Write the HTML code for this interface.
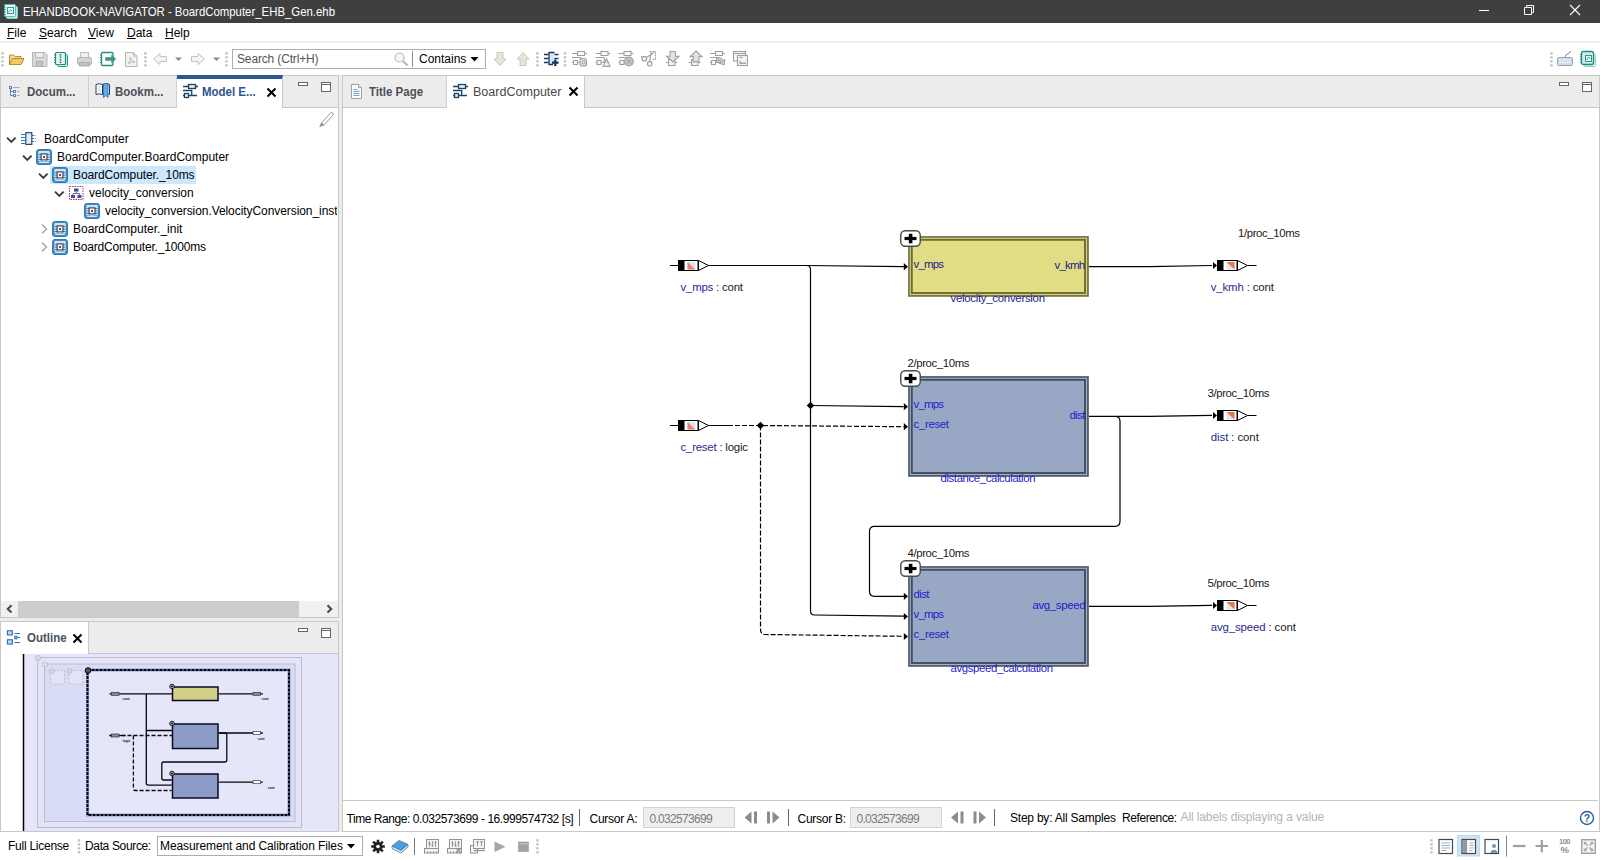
<!DOCTYPE html>
<html>
<head>
<meta charset="utf-8">
<title>EHANDBOOK-NAVIGATOR - BoardComputer_EHB_Gen.ehb</title>
<style>
*{box-sizing:border-box;margin:0;padding:0}
html,body{width:1600px;height:860px;overflow:hidden;background:#fff;font-family:"Liberation Sans",sans-serif;font-size:12px;color:#000}
.abs{position:absolute}
#titlebar{position:absolute;left:0;top:0;width:1600px;height:23px;background:#3f3f3f;color:#fff}
#titlebar .t{position:absolute;left:23px;top:4px;font-size:13px;white-space:nowrap;transform:scaleX(0.876);transform-origin:0 0}
#menubar{position:absolute;left:0;top:23px;width:1600px;height:19px;background:#fff}
#menubar span{position:absolute;top:3px;font-size:12px;white-space:nowrap}
#menubar u{text-decoration:underline}
#menusep{position:absolute;left:0;top:41px;width:1600px;height:2px;background:#f0f0f0}
#toolbar{position:absolute;left:0;top:44px;width:1600px;height:31px;background:#fff}
#main{position:absolute;left:0;top:75px;width:1600px;height:757px;background:#ececec}
#statusbar{position:absolute;left:0;top:832px;width:1600px;height:28px;background:#fff}
.panel{position:absolute;background:#fff;border:1px solid #c8c8c8}
.tabbar{position:absolute;left:0;top:0;right:0;height:32px;background:#ececec;border-bottom:1px solid #c8c8c8}

.tab{position:absolute;top:0;height:32px;font-weight:bold;font-size:12px;color:#4c4f56;white-space:nowrap}
.tab .lbl{position:absolute;top:9.5px;line-height:13px;transform:scaleX(0.957);transform-origin:0 0}
.tab.sep{border-right:1px solid #d0d0d0}
.tab.active{background:#fff;height:32px;border-right:1px solid #c8c8c8}
.tab.focus{border-top:4px solid #2f5591;color:#2f5591}
.tab.focus .lbl{top:6.5px}
.row{position:absolute;left:0;height:18px;white-space:nowrap;font-size:12px;line-height:18px}
.row .lbl{position:absolute;top:0}
.sel{position:absolute;background:#cce8ff;height:18px}
.txt{position:absolute;white-space:nowrap}
svg{position:absolute;overflow:visible}
</style>
</head>
<body>
<div id="titlebar">
  <svg style="left:3px;top:3px" width="16" height="16" viewBox="0 0 16 16">
    <rect x="3.5" y="3.5" width="11" height="12" rx="1" fill="#bfe6e0" stroke="#7fd0c6"/>
    <rect x="1.5" y="1.5" width="11" height="12" rx="1" fill="#e8f7f5" stroke="#58c0b4"/>
    <rect x="4.5" y="4.5" width="6" height="6" fill="#fff" stroke="#2f9e92"/>
    <path d="M5.5 9.5 L7.5 6.5 L9.5 8.5" stroke="#2f9e92" fill="none"/>
    <path d="M1 4h2M1 6.5h2M1 9h2M1 11.5h2" stroke="#2f9e92"/>
  </svg>
  <div class="t">EHANDBOOK-NAVIGATOR - BoardComputer_EHB_Gen.ehb</div>
  <svg style="left:1470px;top:0" width="130" height="23" viewBox="0 0 130 23">
    <path d="M9 10.5h10" stroke="#fff" stroke-width="1"/>
    <path d="M54.5 7.5h7v7h-7z M56.5 7.5v-2h7v7h-2" stroke="#fff" fill="none" stroke-width="1"/>
    <path d="M100 5l10 10M110 5l-10 10" stroke="#fff" stroke-width="1.1"/>
  </svg>
</div>
<div id="menubar">
  <span style="left:7px"><u>F</u>ile</span>
  <span style="left:39px"><u>S</u>earch</span>
  <span style="left:88px"><u>V</u>iew</span>
  <span style="left:127px"><u>D</u>ata</span>
  <span style="left:165px"><u>H</u>elp</span>
</div>
<div id="menusep"></div>
<div id="toolbar">
<svg style="left:0;top:0" width="1600" height="31" viewBox="0 44 1600 31">
  <g stroke="#c0c0c0" stroke-width="2.400" stroke-dasharray="2.300 1.700" fill="none">
    <path d="M2.500 52.300v15"/><path d="M145.500 52.300v15"/><path d="M226.500 52.300v15"/><path d="M537.500 52.300v15"/><path d="M565 52.300v15"/><path d="M1551.500 52.300v15"/>
  </g>
  <!-- open folder -->
  <path d="M9.5 64.5v-9.5h4l1.5 1.5h6v2" fill="#f7dc8e" stroke="#b98a2e"/>
  <path d="M9.5 64.5l3-6h11.5l-3 6z" fill="#f3c963" stroke="#b98a2e"/>
  <!-- floppy (disabled) -->
  <path d="M32.5 52.5h12.5l2 2v12h-14.5z" fill="#d9d9d9" stroke="#b9b9b9"/>
  <rect x="35.5" y="52.5" width="8" height="5" fill="#ececec" stroke="#b9b9b9"/>
  <rect x="36.5" y="61.5" width="6" height="5" fill="#c4c4c4" stroke="#b0b0b0"/>
  <!-- zip notebook -->
  <rect x="57.5" y="54.5" width="10" height="12" rx="1" fill="#c9ece7" stroke="#2a9d8f"/>
  <rect x="55.5" y="52.5" width="10" height="12" rx="1" fill="#e4f6f3" stroke="#1f8e80" stroke-width="1.2"/>
  <path d="M54 55h2M54 57.5h2M54 60h2M54 62.500h2" stroke="#1f8e80"/>
  <path d="M60.500 54v9" stroke="#1f6e66" stroke-width="1.6" stroke-dasharray="1.5 1"/>
  <!-- printer (disabled) -->
  <rect x="80.500" y="52.500" width="8" height="6" fill="#f0f0f0" stroke="#bcbcbc"/>
  <rect x="77.500" y="57.500" width="14" height="7" rx="1.500" fill="#d4d4d4" stroke="#b4b4b4"/>
  <rect x="79.500" y="62.500" width="10" height="3.500" fill="#c0c0c0" stroke="#b0b0b0"/>
  <!-- export -->
  <rect x="101.500" y="52.500" width="11.500" height="13" rx="1" fill="#fbfefd" stroke="#2a8a80" stroke-width="1.300"/>
  <path d="M100 55h2M100 57.500h2M100 60h2M100 62.500h2" stroke="#1f8e80"/>
  <path d="M105.500 57.500h6v-2.300l4.300 3.800-4.300 3.800v-2.300h-6z" fill="#3a968c" stroke="#2a8a80" stroke-width="0.500"/>
  <!-- pdf (disabled) -->
  <path d="M125.500 52.500h8l3.500 3.500v10.500h-11.500z" fill="#f2f2f2" stroke="#b4b4b4"/>
  <path d="M133.500 52.500v3.500h3.500" fill="none" stroke="#b4b4b4"/>
  <path d="M128 63.500c2-2 3-5 2.500-6.500c-1 1 1 4.500 4.500 5c-2-0.500-5 0.500-7 1.500z" fill="none" stroke="#b0b0b0" stroke-width="0.900"/>
  <!-- back / forward -->
  <path d="M153.500 59l6.500-5.500v3h6.500v5h-6.500v3z" fill="#f4f4f4" stroke="#c2c2c2"/>
  <path d="M175 57.500h7l-3.500 3.500z" fill="#8c8c8c"/>
  <path d="M204.500 59l-6.500-5.500v3h-6.500v5h6.500v3z" fill="#f4f4f4" stroke="#c2c2c2"/>
  <path d="M213 57.500h7l-3.500 3.500z" fill="#8c8c8c"/>
  <!-- down / up -->
  <path d="M500 65.500l-6-6.500h3v-6.500h6v6.500h3z" fill="#e6e6da" stroke="#c6c6bc"/>
  <path d="M523 52.500l-6 6.500h3v6.500h6v-6.500h3z" fill="#e6e6da" stroke="#c6c6bc"/>
  <!-- chip icon (blue) -->
  <rect x="549" y="52.500" width="5.500" height="12" fill="#d6e6f8"/>
  <g stroke="#17395c" stroke-width="1.300" fill="none">
    <path d="M554.500 52.500h-5.500v12h4"/>
    <path d="M544 54.500h4.500M544 58.500h4.500M544 62.500h4.500M554.500 54.500h4M554.500 58.500h4"/>
    <path d="M552 62.700h6.600M555.300 59.400v6.600" stroke="#0f3460" stroke-width="2.200"/>
  </g>
  <!-- grey diagram icons -->
  <g stroke="#a0a0a0" fill="#f4f4f4" stroke-width="1.100">
    <g id="gi" fill="#fafafa">
      <rect x="577.500" y="51.500" width="7" height="4"/><path d="M572 53.500h5.500M584.500 53.500h2.500M572 57.500h8.700v5M577.500 62.500h8.500M572 62.500h1.500" fill="none"/><rect x="573.500" y="60.500" width="4" height="4"/>
    </g>
    <rect x="580" y="58.500" width="6.500" height="7.500" rx="2" fill="#e4e4e4"/><path d="M582.500 60.500v3.500h1.500q1 0 1-1t-1-0.800q1 0 1-0.900t-1-0.800z" fill="none" stroke-width="0.800"/>
    <use href="#gi" x="23.500"/>
    <path d="M603 66.500l3.500-8 3.500 8z" fill="#dcdcdc"/><path d="M604.500 64h4" fill="none" stroke="#fff" stroke-width="0.800"/>
    <use href="#gi" x="46.500"/>
    <circle cx="629" cy="61.500" r="4.400" fill="#cbc7c0" stroke="#a4a4a4"/>
    <path d="M626.300 58.800l5.400 5.400M631.700 58.800l-5.400 5.400" fill="none" stroke="#9a9a9a" stroke-width="0.900"/>
    <!-- scissors-like -->
    <path d="M649.500 51.500h6v8h-4" fill="none" stroke-dasharray="2 1"/>
    <circle cx="644.300" cy="58.700" r="2.300"/><circle cx="649.700" cy="63.700" r="2.300"/>
    <path d="M646.300 57.500l8-5M649.700 61.400l1.500-9.500M641 56.500h1.500" fill="none"/>
    <!-- step into -->
    <rect x="668.500" y="59.500" width="6.500" height="6"/><path d="M666 62.500h2.500M675 62.500h2.500" fill="none"/>
    <path d="M670 51.500h5.500v4.700h3.500l-6.200 5.800-6.200-5.800h3.400z" fill="#e3e1da"/>
    <!-- step out -->
    <rect x="691.500" y="59.500" width="6.500" height="6"/><path d="M689 62.500h2.500M698 62.500h2.500" fill="none"/>
    <path d="M696 51l6 5.600h-3.100v5.300h-5.700v-5.300h-3.100z" fill="#e3e1da"/>
    <!-- icon7 -->
    <use href="#gi" x="138"/>
    <path d="M716.500 58.500c3-1.500 6 0 6.500 2.500l1.800-1.200-0.500 4.700-4.500-1 1.600-1.200c-0.700-1.800-2.500-2.500-4.900-1.300z" fill="#dcdad4"/>
    <!-- icon8 windows -->
    <rect x="733.500" y="51.500" width="12" height="9.500" fill="#f8f8f8"/><path d="M733.500 53.500h12" fill="none"/>
    <rect x="737.500" y="55.500" width="10" height="10" fill="#f4f4f4"/>
    <path d="M739.500 57.500h3" fill="none"/>
    <path d="M739.500 64v-4l2.500 2.500h4v1.500z" fill="#a8a8a8" stroke="none"/>
  </g>
  <!-- keyboard -->
  <rect x="1557.500" y="57.500" width="15" height="8" rx="1" fill="#cfdbe8" stroke="#8ea4bc"/>
  <path d="M1559.500 60h11M1559.500 62.500h11" stroke="#fff" stroke-dasharray="1.500 1"/>
  <path d="M1565 57c0-3 5-3 5.500-6" fill="none" stroke="#777"/>
  <!-- notebook right -->
  <rect x="1584.500" y="54.500" width="11" height="12" rx="1" fill="#d9f0ec" stroke="#8fd3ca"/>
  <rect x="1581.500" y="51.500" width="12" height="13" rx="2" fill="#d3eeea" stroke="#1f8e80" stroke-width="1.300"/>
  <rect x="1585.500" y="55.500" width="6" height="6" fill="#fff" stroke="#2a9d8f"/>
  <path d="M1586.500 60l2-3 2 2" stroke="#2a9d8f" fill="none"/>
  <path d="M1580 54.500h2M1580 57h2M1580 59.500h2M1580 62h2" stroke="#1f8e80"/>
</svg>
<div class="abs" style="left:232px;top:5px;width:254px;height:20px;border:1px solid #adadad;background:#fff"></div>
<div class="txt" style="left:237px;top:8px;color:#555;letter-spacing:-0.150px">Search (Ctrl+H)</div>
<svg style="left:393px;top:7px" width="16" height="16" viewBox="0 0 16 16">
  <circle cx="6.500" cy="6.500" r="4.500" fill="#f6f6f6" stroke="#bdbdbd" stroke-width="1.200"/>
  <path d="M10 10l4.500 4.500" stroke="#b0b0b0" stroke-width="1.800"/>
</svg>
<div class="abs" style="left:412px;top:7px;width:1px;height:16px;background:#8a8a8a"></div>
<div class="txt" style="left:419px;top:8px;color:#000">Contains</div>
<svg style="left:470px;top:13px" width="9" height="5" viewBox="0 0 9 5"><path d="M0.500 0h8l-4 4.500z" fill="#000"/></svg>
</div>
<div id="main">
  <!-- LEFT TOP PANEL -->
  <div class="panel" id="lp" style="left:0;top:0;width:339px;height:543px">
    <div class="tabbar"></div>
    <div class="tab sep" style="left:0;width:88px"><span class="lbl" style="left:26px">Docum...</span>
      <svg style="left:7px;top:9px" width="14" height="14" viewBox="8 85 14 14" fill="none" stroke="#5f86b6" stroke-width="1">
        <rect x="9.500" y="86.500" width="2" height="2" fill="#e4eefa"/><path d="M10.500 88.500v7h3M10.500 91.500h3"/>
        <rect x="13.500" y="90.500" width="2" height="2" fill="#e4eefa"/><rect x="13.500" y="94.500" width="2" height="2" fill="#e4eefa"/>
        <path d="M13 87.500h6.500M17 91.500h2.500M17 95.500h2.500" stroke="#93aed0"/>
      </svg>
    </div>
    <div class="tab sep" style="left:88px;width:88px"><span class="lbl" style="left:26px">Bookm...</span>
      <svg style="left:6px;top:6px" width="17" height="18" viewBox="95 82 17 18">
        <path d="M96 84.500q3.500 -1.500 6.500 0v10q-3 -1.500 -6.500 0z" fill="#fff" stroke="#2a3f58" stroke-width="1"/>
        <path d="M102.500 84.500q3.500 -1.500 7 0v10q-3.500 -1.500 -7 0z" fill="#fff" stroke="#2a3f58" stroke-width="1"/>
        <path d="M103.500 83.500h4.500v14l-2.200 -2 -2.300 2z" fill="#62a8ee" stroke="#2a67b0" stroke-width="0.800"/>
        <path d="M97.500 87h3.500M97.500 89h3.500M97.500 91h3.500" stroke="#c4c4c4" stroke-width="0.800"/>
      </svg>
    </div>
    <div class="tab active focus" style="left:176px;width:106px;top:-1px;height:33px"><span class="lbl" style="left:25px">Model E...</span>
      <svg style="left:5px;top:4px" width="16" height="16" viewBox="0 0 16 16" fill="none" stroke="#1d4560" stroke-width="1.300"><rect x="6.500" y="1.500" width="7" height="4" fill="#d9edfb"/><path d="M1 3.500h5.500M13.500 3.500h2.500M1 7.500h8.700v5M6.500 12.500h8.500M1 12.500h1.500"/><rect x="2.500" y="10.500" width="4" height="4" fill="#d9edfb"/></svg>
      <svg style="left:88.500px;top:7.500px" width="11" height="11" viewBox="0 0 11 11"><path d="M1.500 1.500l8 8M9.500 1.500l-8 8" stroke="#000" stroke-width="2"/></svg>
    </div>
    <svg style="left:296px;top:5px" width="40" height="14" viewBox="0 0 40 14" fill="none" stroke="#666">
      <rect x="1.500" y="1.500" width="9" height="3" fill="#fff"/>
      <rect x="24.500" y="1.500" width="9" height="9" fill="#fff"/><path d="M24.500 3.500h9"/>
    </svg>
    <!-- pencil -->
    <svg style="left:317px;top:34px" width="18" height="18" viewBox="0 0 18 18" fill="none" stroke="#9a9a9a">
      <path d="M3.500 13l9.200-10.200c1.200-1.200 3.500 0.800 2.300 2.300l-9.200 10z" fill="#fdfdfd"/><path d="M3.500 13l-1.700 3.500 4-1.400z" fill="#888"/>
    </svg>
    <!-- tree -->
    <div class="sel" style="left:49px;top:90px;width:146px"></div>
    <div class="row" style="top:54px"><span class="lbl" style="left:43px">BoardComputer</span></div>
    <div class="row" style="top:72px"><span class="lbl" style="left:56px">BoardComputer.BoardComputer</span></div>
    <div class="row" style="top:90px"><span class="lbl" style="left:72px;letter-spacing:-0.100px">BoardComputer._10ms</span></div>
    <div class="row" style="top:108px"><span class="lbl" style="left:88px">velocity_conversion</span></div>
    <div class="row" style="top:126px"><span class="lbl" style="left:104px;width:232px;overflow:hidden;letter-spacing:-0.070px">velocity_conversion.VelocityConversion_inst</span></div>
    <div class="row" style="top:144px"><span class="lbl" style="left:72px">BoardComputer._init</span></div>
    <div class="row" style="top:162px"><span class="lbl" style="left:72px;letter-spacing:-0.190px">BoardComputer._1000ms</span></div>
    <svg style="left:0;top:54px" width="120" height="126" viewBox="0 0 120 126">
      <defs>
        <g id="cmp"><rect x="0.500" y="0.500" width="15" height="15" rx="2.500" fill="#3b8dc4" stroke="#2f7db5"/>
          <rect x="2.300" y="2.100" width="11.500" height="10.500" rx="1" fill="#d2e1f3"/>
          <path d="M2.500 5.500h3M2.500 8h3M2.500 10.500h3M10.500 5.500h3M10.500 8h3M10.500 10.500h3" stroke="#5a6078" stroke-width="0.800" fill="none"/>
          <rect x="5.100" y="4.900" width="5.900" height="6" fill="#f4f6fb" stroke="#3a3a50" stroke-width="1.100"/>
          <rect x="7.200" y="7.100" width="1.800" height="1.800" fill="#333"/>
          <path d="M8 11.500v2M3 13.500h10" stroke="#d6e6f5" stroke-width="1.100" fill="none"/></g>
        <path id="chd" d="M0 0l4.300 4.300L8.600 0" fill="none" stroke="#3c3c3c" stroke-width="1.900"/>
        <path id="chr" d="M0 0l4.500 4.500L0 9" fill="none" stroke="#a0a0a0" stroke-width="1.300"/>
      </defs>
      <use href="#chd" x="6" y="7.600"/>
      <g stroke="#1f4f78" fill="none" stroke-width="1.200"><rect x="24.800" y="2.700" width="6" height="11.700" fill="#e4ecf5"/><path d="M20 4.500h4.500M20 7.500h4.500M20 10.500h4.500M20 13.500h4.500" stroke="#2f78b4"/><path d="M31 5.500h3.500M31 8.500h3.500M31 11.500h3.500" stroke="#2f78b4" stroke-dasharray="2 0.800"/></g>
      <use href="#chd" x="22" y="25.600"/><use href="#cmp" x="35" y="19"/>
      <use href="#chd" x="38" y="43.600"/><use href="#cmp" x="51" y="37"/>
      <use href="#chd" x="54" y="61.600"/>
      <g><rect x="68.500" y="56.500" width="13.500" height="13" fill="#fff" stroke="#a02050" stroke-dasharray="1.500 1" stroke-width="0.900"/>
         <rect x="73" y="58.500" width="4.500" height="3" fill="#2f4a9a"/><rect x="70" y="65" width="4" height="3" fill="#4a4ab0"/><rect x="76.500" y="65" width="4" height="3" fill="#4a4ab0"/>
         <path d="M75.300 61.500v2M72 65v-1.500h6.500v1.500" stroke="#555" fill="none" stroke-width="0.800"/></g>
      <use href="#cmp" x="83" y="73"/>
      <use href="#chr" x="41" y="94.500"/><use href="#cmp" x="51" y="91"/>
      <use href="#chr" x="41" y="112.500"/><use href="#cmp" x="51" y="109"/>
    </svg>
    <!-- h scrollbar -->
    <div class="abs" style="left:0;top:525px;width:337px;height:16px;background:#f0f0f0"></div>
    <div class="abs" style="left:17px;top:525px;width:281px;height:16px;background:#cdcdcd"></div>
    <svg style="left:0;top:525px" width="337" height="16" viewBox="0 0 337 16" fill="none" stroke="#484848" stroke-width="2">
      <path d="M10.500 4.300l-3.800 3.600 3.800 3.600"/><path d="M326.500 4.300l3.800 3.600-3.800 3.600"/>
    </svg>
  </div>
  <!-- OUTLINE PANEL -->
  <div class="panel" id="op" style="left:0;top:546px;width:339px;height:211px">
    <div class="tabbar"></div>
    <div class="tab active" style="left:0;width:88px"><span class="lbl" style="left:26px">Outline</span>
      <svg style="left:5px;top:8px" width="16" height="16" viewBox="0 0 16 16" fill="none" stroke="#2e6da4" stroke-width="1.100">
        <rect x="1.450" y="0.750" width="4.900" height="4.200" fill="#b9dbf5"/><rect x="1.450" y="9.750" width="4.900" height="4.300" fill="#b9dbf5"/>
        <rect x="8.800" y="6.300" width="2.200" height="2.400" fill="#e4f0fa"/>
        <path d="M8.500 3.500h5.500M12 7.500h2M8.500 12.500h5.500"/>
      </svg>
      <svg style="left:71px;top:10.500px" width="11" height="11" viewBox="0 0 11 11"><path d="M1.500 1.500l8 8M9.500 1.500l-8 8" stroke="#000" stroke-width="2"/></svg>
    </div>
    <svg style="left:296px;top:5px" width="40" height="14" viewBox="0 0 40 14" fill="none" stroke="#666">
      <rect x="1.500" y="1.500" width="9" height="3" fill="#fff"/>
      <rect x="24.500" y="1.500" width="9" height="9" fill="#fff"/><path d="M24.500 3.500h9"/>
    </svg>
    <svg id="mini" style="left:-1px;top:-1px" width="339" height="211" viewBox="0 621 339 211">
      <rect x="24" y="654" width="314" height="177" fill="#e6e6fa"/>
      <path d="M23.500 654v177" stroke="#000" stroke-width="1.500"/>
      <rect x="37.500" y="657.500" width="264" height="170" fill="#e4e4f8" stroke="#bcbcd0"/>
      <rect x="44.500" y="664" width="250.500" height="157.500" fill="#d8dcf6" stroke="#bcbcd0"/>
      <circle cx="38" cy="658" r="2.500" fill="#dcdcec" stroke="#c0c0d0"/><circle cx="45" cy="664.500" r="2.500" fill="#dcdcec" stroke="#c0c0d0"/>
      <rect x="50.500" y="670.500" width="14" height="13.500" fill="#e2e4f8" stroke="#c0c0cc" stroke-dasharray="2 1.500"/>
      <rect x="69" y="670.500" width="14" height="13.500" fill="#e2e4f8" stroke="#c0c0cc" stroke-dasharray="2 1.500"/>
      <circle cx="51.500" cy="671" r="2.500" fill="#d4d4e4" stroke="#c0c0d0"/><circle cx="69.500" cy="671" r="2.500" fill="#d4d4e4" stroke="#c0c0d0"/>
      <rect x="87.500" y="670" width="201.500" height="145" fill="#e6e6fa" stroke="#8c9cc4" stroke-width="3"/><rect x="87.500" y="670" width="201.500" height="145" fill="none" stroke="#05051a" stroke-width="2" stroke-dasharray="3 1"/>
      <circle cx="88" cy="670.500" r="2.800" fill="#555" stroke="#000"/>
      <g fill="none" stroke="#08080f" stroke-width="1.300">
        <path d="M109.500 693.800h62.500M146.300 693.800v89.300q0 2 2 2h23.500M146.300 730.500h25.500"/>
        <path d="M109.500 735.500h62.500M133.400 735.500v53q0 2 2 2h36" stroke-dasharray="4 2"/>
        <path d="M109.500 735.500h16" stroke-width="1.300"/>
        <path d="M218.800 693.800h44M218.800 733h44M218.800 782.200h44"/>
        <path d="M218.800 733h6q2 0 2 2v25q0 2 -2 2h-61q-2 0 -2 2v14q0 2 2 2h8"/>
      </g>
      <g stroke="#0a0a20" stroke-width="1.500">
        <rect x="172.500" y="687" width="45.500" height="13.500" fill="#d2cf86"/>
        <rect x="172.500" y="724" width="45.500" height="24.500" fill="#8c9cc6"/>
        <rect x="172.500" y="774" width="45.500" height="24" fill="#8c9cc6"/>
      </g>
      <g fill="#e8e8f4" stroke="#000" stroke-width="0.900">
        <circle cx="172" cy="686.500" r="2.300"/><circle cx="172" cy="723.500" r="2.300"/><circle cx="172" cy="773.500" r="2.300"/>
      </g>
      <path d="M170.500 686.500h3M172 685v3M170.500 723.500h3M172 722v3M170.500 773.500h3M172 772v3" stroke="#000" stroke-width="0.800"/>
      <g stroke="#333" stroke-width="0.700">
        <rect x="111.500" y="692.300" width="7.500" height="3" fill="#8c8c98"/><rect x="111.500" y="734" width="7.500" height="3" fill="#8c8c98"/>
        <rect x="253" y="692.300" width="7.500" height="3" fill="#8c8c98"/><rect x="253" y="731.500" width="7.500" height="3" fill="#fff"/><rect x="253" y="780.700" width="7.500" height="3" fill="#fff"/>
      </g>
      <g font-family="'Liberation Sans',sans-serif" font-size="3.200" font-weight="bold" fill="#111">
        <text x="121" y="700">· cont</text><text x="121" y="741.500">· logic</text>
        <text x="260" y="700">· cont</text><text x="256" y="739.500">· cont</text><text x="266" y="788.500">· cont</text>
      </g>
    </svg>
  </div>
  <!-- EDITOR PANEL -->
  <div class="panel" id="ep" style="left:342px;top:0;width:1258px;height:757px">
    <div class="tabbar"></div>
    <div class="tab sep" style="left:0;width:104px"><span class="lbl" style="left:26px">Title Page</span>
      <svg style="left:7px;top:8px" width="13" height="16" viewBox="0 0 13 16">
        <path d="M1.500 0.500h7l3 3v11h-10z" fill="#fffdf5" stroke="#a8a08a"/><path d="M8.500 0.500v3h3" fill="#f0ead8" stroke="#a8a08a"/>
        <path d="M3.500 5.500h4M3.500 7.500h6M3.500 9.500h6M3.500 11.500h6" stroke="#6f9fe0"/>
      </svg>
    </div>
    <div class="tab active" style="left:104px;width:138px;font-weight:normal;font-size:12.500px;color:#484848"><span class="lbl" style="left:26px;top:10px;transform:none;letter-spacing:0.020px">BoardComputer</span>
      <svg style="left:5px;top:7px" width="16" height="16" viewBox="0 0 16 16" fill="none" stroke="#1d4560" stroke-width="1.300"><rect x="6.500" y="1.500" width="7" height="4" fill="#d9edfb"/><path d="M1 3.500h5.500M13.500 3.500h2.500M1 7.500h8.700v5M6.500 12.500h8.500M1 12.500h1.500"/><rect x="2.500" y="10.500" width="4" height="4" fill="#d9edfb"/></svg>
      <svg style="left:121px;top:9.500px" width="11" height="11" viewBox="0 0 11 11"><path d="M1.500 1.500l8 8M9.500 1.500l-8 8" stroke="#000" stroke-width="2"/></svg>
    </div>
    <svg style="left:1215px;top:5px" width="40" height="14" viewBox="0 0 40 14" fill="none" stroke="#666">
      <rect x="1.500" y="1.500" width="9" height="3" fill="#fff"/>
      <rect x="24.500" y="1.500" width="9" height="9" fill="#fff"/><path d="M24.500 3.500h9"/>
    </svg>
    <svg id="dg" style="left:-1px;top:-1px" width="1257" height="758" viewBox="342 75 1257 758" font-family="'Liberation Sans',sans-serif" font-size="11.4">
      <defs>
        <g id="plus"><rect x="0.750" y="0.750" width="19.500" height="15.500" rx="4.500" fill="#fff" stroke="#4a4a4a" stroke-width="1.400"/><path d="M4.500 8.500h12" stroke="#000" stroke-width="3.200"/><path d="M10.600 3.800v9.500" stroke="#000" stroke-width="3.600"/></g>
        <g id="pin"><rect x="0" y="-5.500" width="6" height="11" fill="#000"/><rect x="6" y="-5" width="14" height="10" fill="#fff" stroke="#000"/>
          <rect x="9.500" y="-3.500" width="8" height="7.500" fill="#dde6f6"/><path d="M9.500 -3.500v7.500h8z" fill="#e8866a"/>
          <path d="M20.500 -5l10 5-10 5z" fill="#fff" stroke="#000"/></g>
        <g id="pout"><path d="M-4 -3.500l4 3.500-4 3.500z" fill="#000"/><rect x="0" y="-5.500" width="6" height="11" fill="#000"/><rect x="6" y="-5" width="14" height="10" fill="#fff" stroke="#000"/>
          <rect x="9.500" y="-3.500" width="8" height="7.500" fill="#dde6f6"/><path d="M9.500 -3.500h8v7.500z" fill="#e8764a"/>
          <path d="M20.500 -5l10 5-10 5z" fill="#fff" stroke="#000"/><path d="M30.500 0h9" stroke="#000"/></g>
        <path id="ah" d="M-4.200 -3.600l4.200 3.600-4.200 3.600z" fill="#000"/>
      </defs>
      <!-- wires -->
      <g fill="none" stroke="#000" stroke-width="1.200">
        <path d="M670 265.500h8M708 265.500h97L904 266.700"/>
        <path d="M806.500 265.500q4 0 4 4v341.500q0 4 4 4l89.500 1.200"/>
        <path d="M810.500 405.500l93 1.200"/>
        <path d="M670 425.500h8M708 425.500h20"/>
        <path d="M728 425.500h32.500l143 1.200M760.500 425.500v204q0 5 5 5l138 1.800" stroke-dasharray="5 2"/>
        <path d="M1089 266.700h60l63 -1.200"/>
        <path d="M1089 416.300h60l63 -1M1089 416.300h26q5 0 5 5v100q0 5 -5 5h-240.500q-5 0 -5 5v60q0 5 5 5h30"/>
        <path d="M1089 606.300h60l63 -1"/>
      </g>
      <path d="M810.500 401.700l3.800 3.800-3.800 3.800-3.800-3.800z M760.500 421.700l3.800 3.800-3.800 3.800-3.800-3.800z" fill="#000"/>
      <use href="#ah" x="908" y="266.700"/><use href="#ah" x="908" y="406.700"/><use href="#ah" x="908" y="426.700"/>
      <use href="#ah" x="908" y="596.300"/><use href="#ah" x="908" y="616.500"/><use href="#ah" x="908" y="636.500"/>
      <!-- ports -->
      <use href="#pin" x="678" y="265.500"/><use href="#pin" x="678" y="425.500"/>
      <use href="#pout" x="1217" y="265.500"/><use href="#pout" x="1217" y="415.500"/><use href="#pout" x="1217" y="605.500"/>
      <!-- block 1 -->
      <rect x="909" y="237" width="178.950" height="58.9" fill="#e1dd85" stroke="#77743e" stroke-width="1.800"/>
      <rect x="910.400" y="238.4" width="176.100" height="56.1" fill="none" stroke="#d6d28c" stroke-width="1"/>
      <rect x="911.800" y="239.8" width="173.200" height="53.2" fill="none" stroke="#6e6c2c" stroke-width="1.900"/>
      <!-- block 2 -->
      <rect x="909" y="377" width="178.950" height="98.9" fill="#98a8c4" stroke="#555d6c" stroke-width="1.800"/>
      <rect x="910.400" y="378.4" width="176.100" height="96.1" fill="none" stroke="#a3b0c6" stroke-width="1"/>
      <rect x="911.800" y="379.8" width="173.200" height="93.2" fill="none" stroke="#414d63" stroke-width="1.900"/>
      <!-- block 3 -->
      <rect x="909" y="567" width="178.950" height="98.9" fill="#98a8c4" stroke="#555d6c" stroke-width="1.800"/>
      <rect x="910.400" y="568.4" width="176.100" height="96.1" fill="none" stroke="#a3b0c6" stroke-width="1"/>
      <rect x="911.800" y="569.8" width="173.200" height="93.2" fill="none" stroke="#414d63" stroke-width="1.900"/>
      <use href="#plus" x="900" y="230"/><use href="#plus" x="900" y="370"/><use href="#plus" x="900" y="560"/>
      <!-- texts -->
      <g fill="#22228c">
        <text x="913.500" y="268" textLength="30.500">v_mps</text><text x="1054.500" y="268.500" textLength="30.500">v_kmh</text>
        <text x="950.500" y="301.500" textLength="94.500">velocity_conversion</text>
      </g>
      <g fill="#1c1ccc">
        <text x="913.500" y="408" textLength="30.500">v_mps</text><text x="913.500" y="428" textLength="35.500">c_reset</text><text x="1069.500" y="419" textLength="16">dist</text>
        <text x="940.500" y="481.500" textLength="95">distance_calculation</text>
        <text x="913.500" y="598" textLength="16">dist</text><text x="913.500" y="618" textLength="30.500">v_mps</text><text x="913.500" y="638" textLength="35.500">c_reset</text>
        <text x="1032.500" y="609" textLength="53">avg_speed</text>
        <text x="950.500" y="671.500" textLength="102.500">avgspeed_calculation</text>
      </g>
      <g fill="#1a1a1a">
        <text x="1238" y="236.500" textLength="62">1/proc_10ms</text><text x="907.500" y="366.500" textLength="62">2/proc_10ms</text>
        <text x="1207.500" y="396.500" textLength="62">3/proc_10ms</text><text x="907.500" y="556.500" textLength="62">4/proc_10ms</text>
        <text x="1207.500" y="586.500" textLength="62">5/proc_10ms</text>
        <text x="680.500" y="290.500" textLength="62.500"><tspan fill="#2a2a8c">v_mps</tspan> : cont</text>
        <text x="680.500" y="450.500" textLength="67.500"><tspan fill="#2a2a8c">c_reset</tspan> : logic</text>
        <text x="1210.800" y="290.500" textLength="63"><tspan fill="#2a2a8c">v_kmh</tspan> : cont</text>
        <text x="1210.800" y="440.500" textLength="48"><tspan fill="#2a2a8c">dist</tspan> : cont</text>
        <text x="1210.800" y="630.500" textLength="85"><tspan fill="#2a2a8c">avg_speed</tspan> : cont</text>
      </g>
    </svg>
    <div class="abs" style="left:0;top:724px;width:1255px;height:1px;background:#c8c8c8"></div>
    <div id="tl" class="abs" style="left:-343px;top:-76px;width:1600px;height:860px;pointer-events:none">
      <div class="txt" style="left:346.500px;top:811.500px;letter-spacing:-0.440px">Time Range: 0.032573699 - 16.999574732 [s]</div>
      <div class="abs" style="left:579px;top:809px;width:1px;height:17px;background:#666"></div>
      <div class="txt" style="left:589.500px;top:811.500px;letter-spacing:-0.250px">Cursor A:</div>
      <div class="abs" style="left:643px;top:807px;width:92px;height:21px;background:#efefef;border:1px solid #d2d2d2"></div>
      <div class="txt" style="left:649.500px;top:811.500px;color:#7a7a7a;letter-spacing:-0.700px">0.032573699</div>
      <div class="abs" style="left:787.500px;top:809px;width:1px;height:17px;background:#666"></div>
      <div class="txt" style="left:797.500px;top:811.500px;letter-spacing:-0.250px">Cursor B:</div>
      <div class="abs" style="left:850px;top:807px;width:92px;height:21px;background:#efefef;border:1px solid #d2d2d2"></div>
      <div class="txt" style="left:856.500px;top:811.500px;color:#7a7a7a;letter-spacing:-0.700px">0.032573699</div>
      <div class="abs" style="left:993.500px;top:809px;width:1px;height:17px;background:#666"></div>
      <div class="txt" style="left:1010px;top:811px;letter-spacing:-0.220px">Step by: All Samples</div>
      <div class="txt" style="left:1122px;top:811px;letter-spacing:-0.400px">Reference:</div>
      <div class="txt" style="left:1180.500px;top:810px;color:#b4b4b4;letter-spacing:-0.110px">All labels displaying a value</div>
      <svg style="left:0;top:0" width="1600" height="860" viewBox="0 0 1600 860">
        <g fill="#8c8c8c">
          <path id="sb" d="M744.500 817.500l7-6v12z M754 811.500h3v12h-3z"/>
          <path id="sf" d="M779.500 817.500l-7-6v12z M770 811.500h-3v12h3z"/>
          <use href="#sb" x="206.500"/><use href="#sf" x="206.500"/>
        </g>
        <circle cx="1587" cy="818" r="6.500" fill="#fff" stroke="#2b5f9a" stroke-width="1.400"/>
        <text x="1587" y="822" font-size="10.500" font-weight="bold" text-anchor="middle" fill="#2b5f9a" font-family="'Liberation Sans',sans-serif">?</text>
      </svg>
    </div>
  </div>
</div>
<div id="statusbar">
  <div class="txt" style="left:8px;top:6.500px;letter-spacing:-0.250px">Full License</div>
  <div class="txt" style="left:85px;top:6.500px;letter-spacing:-0.350px">Data Source:</div>
  <div class="abs" style="left:156.500px;top:4px;width:206px;height:20px;border:1px solid #adadad;background:#fff"></div>
  <div class="txt" style="left:160px;top:6.500px;letter-spacing:-0.100px">Measurement and Calibration Files</div>
  <svg style="left:0;top:0" width="1600" height="28" viewBox="0 832 1600 28">
    <g stroke="#c0c0c0" stroke-width="2.400" stroke-dasharray="2.300 1.700" fill="none"><path d="M79 839.300v15"/><path d="M537.500 839.300v15"/><path d="M1431.500 839.300v15"/></g>
    <path d="M347 844h8l-4 4.500z" fill="#000"/>
    <!-- gear -->
    <g transform="translate(378 846.500)"><circle r="4.600" fill="#222"/><g stroke="#222" stroke-width="2.600"><path d="M0 -6.800v13.600M-6.800 0h13.600M-4.800 -4.800l9.600 9.600M4.800 -4.800l-9.600 9.600"/></g><circle r="1.800" fill="#fff"/></g>
    <!-- blue book -->
    <path d="M392 846l7-5.500 9 4-7 6z" fill="#4f9ddc" stroke="#2f78b8" stroke-width="0.800"/><path d="M392 846v2.500l9 4.500 7-6v-2.500l-7 6z" fill="#dfeefa" stroke="#2f78b8" stroke-width="0.800"/>
    <path d="M414.500 838v17" stroke="#7a7a7a"/>
    <g fill="#f3f3f3" stroke="#929292">
      <g id="sl"><rect x="426.500" y="839.500" width="12" height="9"/><rect x="424.500" y="848.500" width="14" height="4.500"/>
      <path d="M429.500 841v6M432.500 841v6M435.500 841v6" fill="none" stroke-width="0.900"/><path d="M428.500 843.500h2M431.500 845h2M434.500 842.500h2" stroke-width="1.400" fill="none"/>
      <path d="M427.500 851v2M430.500 851v2M433.500 851v2M436.500 851v2" fill="none" stroke-width="0.800"/></g>
      <use href="#sl" x="23"/><path d="M456 848l5 5M461 848l-5 5" fill="none" stroke-width="1.300"/>
      <rect x="470.500" y="845.500" width="7" height="7.500"/><rect x="473.500" y="839.500" width="11" height="9"/><path d="M477.500 841v5M481.500 841v5M476 842h3M480 842h3" fill="none" stroke-width="0.900"/><path d="M474 850.500h11" fill="none" stroke-width="1.300"/>
    </g>
    <path d="M494.500 841.500l11 5.300-11 5.300z" fill="#a6a6a6"/>
    <rect x="518.500" y="842" width="10" height="9.500" fill="#a2a2a2" stroke="#999" stroke-width="0.600"/><rect x="519.500" y="843" width="8" height="1.500" fill="#bdbdbd"/>
    <!-- right side -->
    <rect x="1439" y="839.500" width="13.500" height="14" fill="#fff" stroke="#484848" stroke-width="1.200"/><path d="M1441.500 843h8.500M1441.500 845.500h8.500M1441.500 848h8.500M1441.500 850.500h5" stroke="#8aa4c8" stroke-width="0.900"/>
    <rect x="1457.500" y="835.500" width="22" height="20.500" fill="#cfe4f7" stroke="#bcdaf2"/>
    <rect x="1462" y="839.500" width="13.500" height="14" fill="#fff" stroke="#484848" stroke-width="1.200"/><rect x="1462.600" y="840.100" width="4.500" height="12.800" fill="#8a9ab0"/><path d="M1469.500 843h4M1469.500 845.500h4M1469.500 848h4M1469.500 850.500h3" stroke="#9a9a9a" stroke-width="0.900"/>
    <rect x="1485" y="839.500" width="13.500" height="14" fill="#fff" stroke="#484848" stroke-width="1.200"/><circle cx="1494" cy="846" r="2.100" fill="#6f97c4"/><path d="M1490.500 853c0-4.500 7-4.500 7 0z" fill="#6f97c4"/>
    <path d="M1506.500 835.500v21" stroke="#8a8a8a"/>
    <path d="M1513 846h12.500" stroke="#a0a0a0" stroke-width="2.200"/>
    <path d="M1535.500 846h12.500M1541.800 840v12.200" stroke="#a0a0a0" stroke-width="2.200"/>
    <text x="1559" y="844.200" font-size="7.500" font-weight="bold" fill="#8e8e8e" font-family="'Liberation Sans',sans-serif" textLength="11.500">100</text>
    <text x="1560.500" y="853" font-size="9.500" font-weight="bold" fill="#8e8e8e" font-family="'Liberation Sans',sans-serif" textLength="8.500" lengthAdjust="spacingAndGlyphs">%</text>
    <rect x="1581.700" y="839.700" width="13.600" height="13.600" fill="#f4f4f4" stroke="#a2a2a2" stroke-width="1.400"/>
    <g fill="#a6a6a6" stroke="#a6a6a6" stroke-width="1.500"><path d="M1584.500 842.500l3 3M1592.500 842.500l-3 3M1584.500 850.500l3-3M1592.500 850.500l-3-3" fill="none"/>
    <path d="M1583.800 841.800h3.200l-3.200 3.200zM1593.200 841.800v3.200l-3.200-3.200zM1583.800 851.200v-3.200l3.200 3.200zM1593.200 851.200h-3.200l3.200-3.200z" stroke="none"/></g>
  </svg>
</div>
</body>
</html>
